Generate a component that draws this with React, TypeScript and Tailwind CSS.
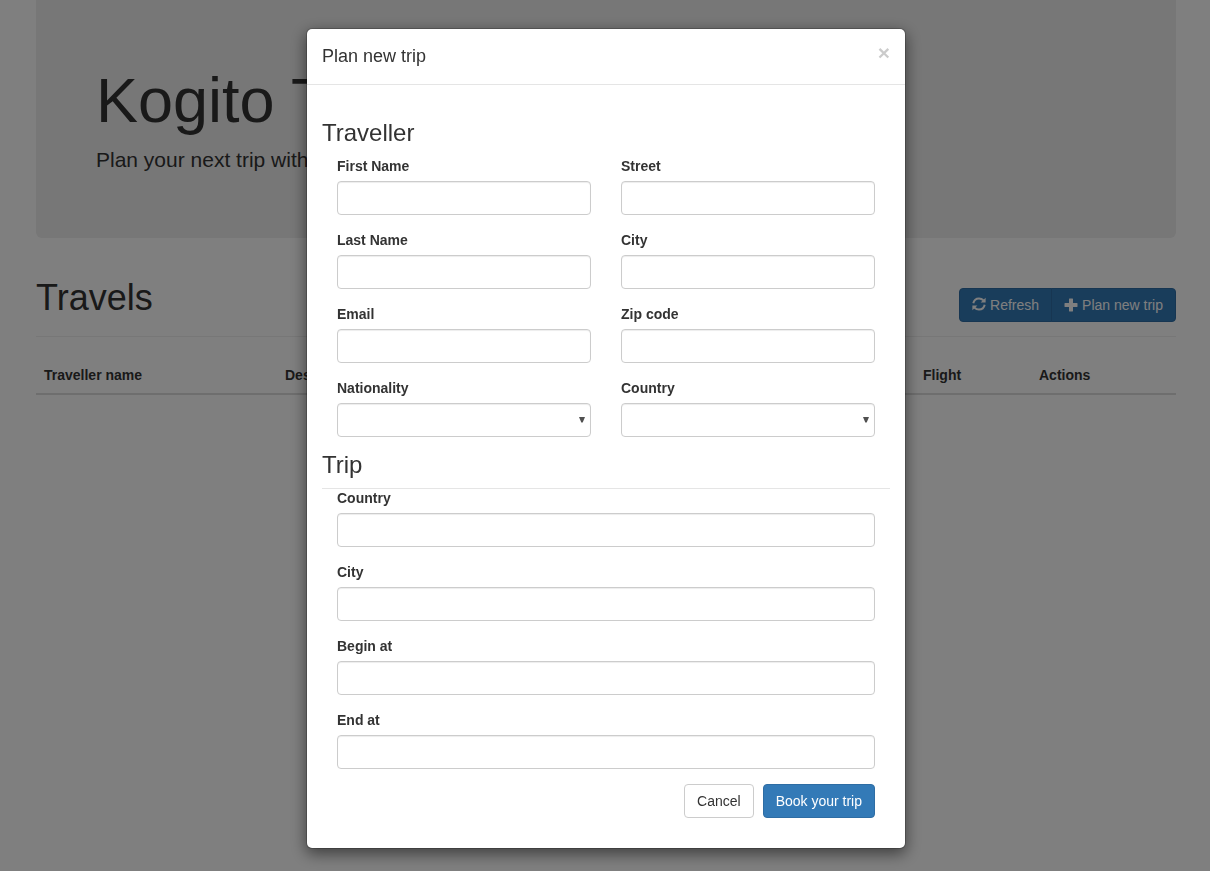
import React from "react";

function RefreshIcon() {
  return (
    <svg viewBox="0 0 14 14" className="mr-1 mb-0.5 h-3.5 w-3.5 shrink-0" aria-hidden="true">
      <path d="M1.3 6.2C2 3 4.4 1.4 7 1.4C8.8 1.4 10.2 2 11.4 3.2" fill="none" stroke="currentColor" strokeWidth="2" />
      <path d="M13.6 0.8V5.6H8.6Z" fill="currentColor" />
      <path d="M12.7 7.8C12 11 9.6 12.6 7 12.6C5.2 12.6 3.8 12 2.6 10.8" fill="none" stroke="currentColor" strokeWidth="2" />
      <path d="M0.4 13.2V8.4H5.4Z" fill="currentColor" />
    </svg>
  );
}

function PlusIcon() {
  return (
    <svg viewBox="0 0 14 14" className="mr-1 mb-px h-3.5 w-3.5 shrink-0" aria-hidden="true">
      <path
        d="M5.4 0.5H8.6Q9 0.5 9 0.9V5H13.1Q13.5 5 13.5 5.4V8.6Q13.5 9 13.1 9H9V13.1Q9 13.5 8.6 13.5H5.4Q5 13.5 5 13.1V9H0.9Q0.5 9 0.5 8.6V5.4Q0.5 5 0.9 5H5V0.9Q5 0.5 5.4 0.5Z"
        fill="currentColor"
      />
    </svg>
  );
}

const controlClass =
  "block h-[34px] w-full rounded border border-[#ccc] bg-white px-3 text-sm text-[#555] shadow-[inset_0_1px_1px_rgba(0,0,0,0.075)] outline-none";

function Field({ label, select = false }: { label: string; select?: boolean }) {
  return (
    <label className="block h-[74px]">
      <span className="mb-[5px] block leading-5 font-bold">{label}</span>
      {select ? (
        <span className="relative block">
          <select className={controlClass + " appearance-none"} />
          <svg
            viewBox="0 0 6 6"
            className="pointer-events-none absolute top-[14px] right-[6px] h-1.5 w-1.5"
            aria-hidden="true"
          >
            <path d="M0 0H6L3.7 5.5H2.3Z" fill="#505050" />
          </svg>
        </span>
      ) : (
        <input className={controlClass} />
      )}
    </label>
  );
}

function TravelsPage() {
  return (
    <div className="mx-auto w-[1140px] pl-0">
      <div className="h-[238px] rounded-b-md bg-[#eee] px-[60px] pt-[66px]">
        <h1 className="mb-2.5 text-[63px] leading-[69px]">Kogito Travel Agency</h1>
        <p className="text-[21px] leading-[30px] font-light">Plan your next trip with Kogito</p>
      </div>
      <div className="mt-10 flex h-[59px] items-start justify-between border-b border-[#eee]">
        <h2 className="text-4xl leading-[39.6px]">Travels</h2>
        <div className="mt-2.5 flex h-[34px] text-white">
          <button className="flex items-center rounded-l border border-[#2e6da4] bg-[#337ab7] px-3">
            <RefreshIcon />
            Refresh
          </button>
          <button className="-ml-px flex items-center rounded-r border border-[#2e6da4] bg-[#337ab7] px-3">
            <PlusIcon />
            Plan new trip
          </button>
        </div>
      </div>
      <table className="mt-5 w-full table-fixed border-collapse">
        <thead>
          <tr className="border-b-2 border-[#ddd] text-left leading-5">
            <th className="w-[241px] p-2">Traveller name</th>
            <th className="w-[360px] p-2">Destination</th>
            <th className="w-[278px] p-2">Hotel</th>
            <th className="w-[116px] p-2">Flight</th>
            <th className="p-2">Actions</th>
          </tr>
        </thead>
      </table>
    </div>
  );
}

function TripDialog() {
  return (
    <div
      role="dialog"
      className="mt-7 h-[821px] w-[600px] rounded-md border border-black/20 bg-white bg-clip-padding shadow-[0_5px_15px_rgba(0,0,0,0.5)]"
    >
      <header className="flex h-14 items-start justify-between border-b border-[#e5e5e5] px-[15px] pt-[15px]">
        <h4 className="text-lg leading-[25px]">Plan new trip</h4>
        <button className="-mt-0.5 text-[21px] leading-[21px] font-bold text-black opacity-20 [text-shadow:0_1px_0_#fff]">
          ×
        </button>
      </header>
      <div className="px-[15px] pt-[35px]">
        <h3 className="mb-2.5 text-2xl leading-[26px]">Traveller</h3>
        <div className="grid grid-cols-2 gap-x-[30px] px-[15px]">
          <Field label="First Name" />
          <Field label="Street" />
          <Field label="Last Name" />
          <Field label="City" />
          <Field label="Email" />
          <Field label="Zip code" />
          <Field label="Nationality" select />
          <Field label="Country" select />
        </div>
        <h3 className="h-[37px] border-b border-[#e5e5e5] text-2xl leading-[26px]">Trip</h3>
        <div className="-mt-px px-[15px]">
          <Field label="Country" />
          <Field label="City" />
          <Field label="Begin at" />
          <Field label="End at" />
          <div className="flex h-[34px] justify-end gap-[9px]">
            <button className="rounded border border-[#ccc] bg-white px-3">Cancel</button>
            <button className="rounded border border-[#2e6da4] bg-[#337ab7] px-3 text-white">
              Book your trip
            </button>
          </div>
        </div>
      </div>
    </div>
  );
}

export default function App() {
  return (
    <div className="h-[871px] overflow-hidden bg-white pl-0.5 font-['Liberation_Sans',Arial,sans-serif] text-sm leading-5 text-[#333]">
      <TravelsPage />
      <div className="fixed inset-0 bg-black/50" />
      <div className="fixed inset-0 flex items-start justify-center pl-0.5">
        <TripDialog />
      </div>
    </div>
  );
}
